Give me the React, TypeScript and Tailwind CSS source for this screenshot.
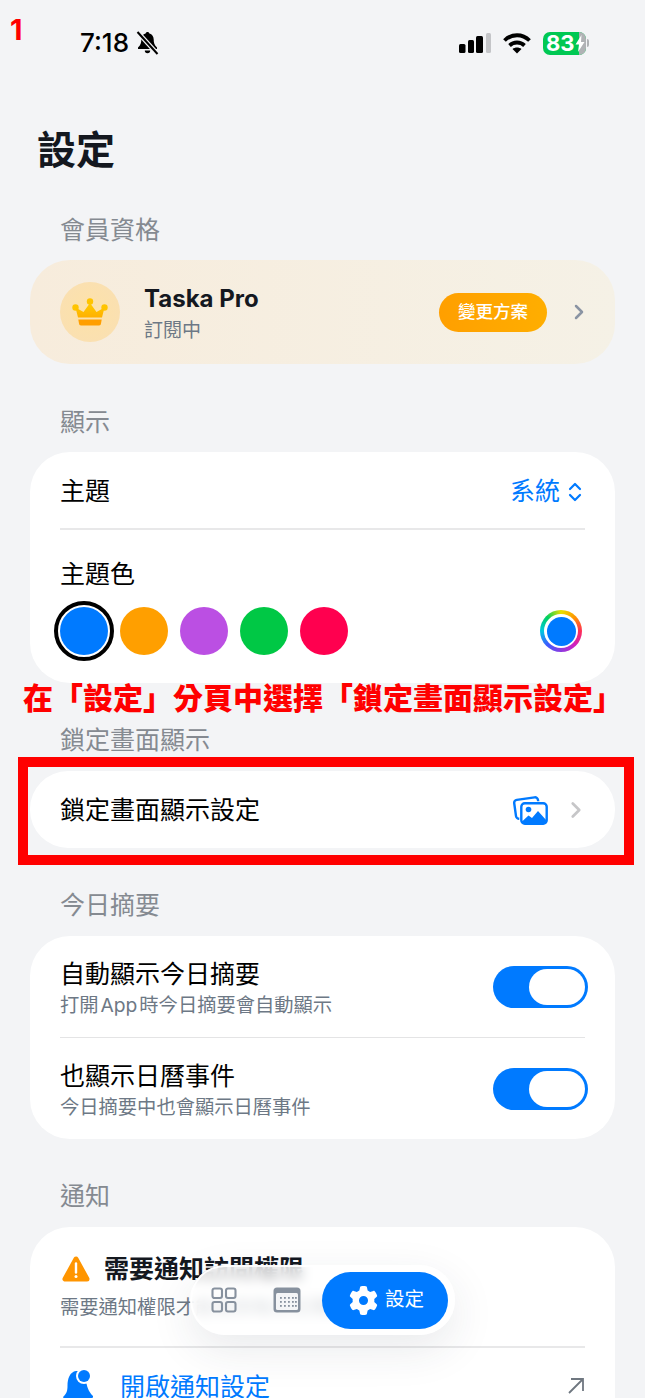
import { ChevronRight, ChevronsUpDown } from 'lucide-react';
import { FaGear } from 'react-icons/fa6';

const themeColors = ['bg-[#ff9f00]', 'bg-[#bb4fe3]', 'bg-[#00c845]', 'bg-[#ff004f]'];

const SectionLabel = ({ children }: { children: string }) => (
  <p className="px-[60px] text-[25px] leading-[30px] text-[#858a91]">{children}</p>
);

const Toggle = () => (
  <div className="flex h-[42px] w-[95px] shrink-0 items-center justify-end rounded-full bg-[#007aff] pr-[3px]">
    <div className="h-[36px] w-[56px] rounded-full bg-white" />
  </div>
);

const StatusBar = () => (
  <div className="flex h-[86px] items-center justify-between pl-[80px] pr-[56px]">
    <div className="flex items-center gap-[7px]">
      <span className="text-[26px] font-medium leading-none text-black">7:18</span>
      <svg width="23" height="24" viewBox="0 0 23 24">
        <path d="M11.500 1c1 0 1.700.7 1.900 1.600 2.800.8 4.300 3 4.300 6 0 3.400.6 5.500 3.300 8v1.400H2v-1.400c2.700-2.500 3.300-4.600 3.300-8 0-3 1.500-5.200 4.300-6C9.800 1.700 10.500 1 11.500 1z" fill="#000" />
        <path d="M8.800 19.500h5.400a2.700 2.700 0 0 1-5.400 0z" fill="#000" />
        <path d="M1.500 1l20 22" stroke="#f3f4f6" strokeWidth="4.500" />
        <path d="M1.500 1l20 22" stroke="#000" strokeWidth="2" />
      </svg>
    </div>
    <div className="flex items-center gap-[12px]">
      <svg width="32" height="20" viewBox="0 0 32 20">
        <rect x="0" y="11" width="6.500" height="9" rx="1.500" fill="#000" />
        <rect x="9" y="7" width="6" height="13" rx="1.500" fill="#000" />
        <rect x="17" y="3" width="7" height="17" rx="1.500" fill="#000" />
        <rect x="27" y="0" width="5" height="20" rx="1.500" fill="#c4c5c8" />
      </svg>
      <svg width="28" height="22" viewBox="0 0 28 22" fill="none" stroke="#000" strokeWidth="3.800">
        <path d="M1.500 8.500c7-7 18-7 25 0" />
        <path d="M6.500 13.500c4.200-4 10.800-4 15 0" />
        <path d="M14 21.500l-4.500-4.500c2.500-2 6.500-2 9 0z" fill="#000" stroke="none" />
      </svg>
      <div className="flex items-center">
        <div className="relative flex h-[23px] w-[43px] items-center overflow-hidden rounded-[7px] bg-[#00c853] pl-[3px]">
          <div className="absolute inset-y-0 right-0 w-[7px] bg-[#b0b2b5]" />
          <span className="relative text-[22px] font-bold leading-none text-white">83</span>
          <svg className="absolute right-[1px] top-[3px]" width="10" height="17" viewBox="0 0 10 17">
            <path d="M6.500 0L0.500 9.500h3.500L3 17l6.500-10H6z" fill="#fff" />
          </svg>
        </div>
        <div className="ml-[1px] h-[8px] w-[2px] rounded-r-full bg-[#b0b2b5]" />
      </div>
    </div>
  </div>
);

const MembershipCard = () => (
  <div className="mx-[30px] mt-[15px] flex h-[104px] items-center rounded-[40px] bg-gradient-to-r from-[#f7ecdc] to-[#f5f1e6] pl-[30px] pr-[24px]">
    <div className="flex h-[60px] w-[60px] items-center justify-center rounded-full bg-[radial-gradient(circle,#fde2a8_0%,#f9dfb4_100%)]">
      <svg width="36" height="28" viewBox="0 0 36 28">
        <defs>
          <linearGradient id="crown" x1="0" y1="0" x2="0" y2="1">
            <stop offset="0" stopColor="#ffcc00" />
            <stop offset="1" stopColor="#ffb000" />
          </linearGradient>
        </defs>
        <circle cx="18" cy="3.500" r="3.200" fill="#ffc400" />
        <circle cx="3.500" cy="9.500" r="3.200" fill="#ffc400" />
        <circle cx="32.500" cy="9.500" r="3.200" fill="#ffc400" />
        <path d="M18 5l6.500 9 8-4.500-2.500 10H6L3.500 9.500l8 4.500z" fill="url(#crown)" />
        <path d="M6.300 21.500h23.400l-.7 4a2 2 0 0 1-2 2H9a2 2 0 0 1-2-2z" fill="#ff9f00" />
      </svg>
    </div>
    <div className="ml-[24px] mt-[5px] flex-1">
      <p className="text-[24px] font-bold leading-[30px] text-[#14181f]">Taska Pro</p>
      <p className="mt-[2px] text-[19px] leading-[30px] text-[#6d7885]">訂閱中</p>
    </div>
    <div className="flex h-[39px] w-[108px] items-center justify-center rounded-full bg-gradient-to-r from-[#ff9f00] to-[#ffae00] text-[17.500px] font-medium text-white">
      變更方案
    </div>
    <ChevronRight className="ml-[20px] text-[#8a94a3]" size={24} strokeWidth={2.500} />
  </div>
);

const DisplayCard = () => (
  <div className="mx-[30px] mt-[15px] h-[231px] rounded-[40px] bg-white px-[30px]">
    <div className="flex h-[78px] items-center justify-between border-b-2 border-[#e8e8e9] pt-[4px]">
      <p className="text-[25px] text-black">主題</p>
      <div className="-mr-[2px] flex items-center gap-[3px] text-[#007aff]">
        <span className="text-[25px]">系統</span>
        <ChevronsUpDown size={24} strokeWidth={2.200} />
      </div>
    </div>
    <p className="mt-[29px] text-[25px] leading-[30px] text-black">主題色</p>
    <div className="mt-[12px] flex items-center">
      <div className="-ml-[6px] flex h-[60px] w-[60px] shrink-0 items-center justify-center rounded-full border-4 border-black bg-white">
        <div className="h-[48px] w-[48px] rounded-full bg-[#007aff]" />
      </div>
      <div className="ml-[6px] flex flex-1 items-center gap-[12px]">
        {themeColors.map(color => (
          <div key={color} className={`h-[48px] w-[48px] rounded-full ${color}`} />
        ))}
      </div>
      <div className="mr-[3px] flex h-[42px] w-[42px] items-center justify-center rounded-full bg-[conic-gradient(#e8e000,#ff9500,#ff2d55,#d020c0,#8e3be0,#3b5bff,#00c8e0,#00d060,#e8e000)]">
        <div className="flex h-[34px] w-[34px] items-center justify-center rounded-full bg-white">
          <div className="h-[29px] w-[29px] rounded-full bg-[#007aff]" />
        </div>
      </div>
    </div>
  </div>
);

const LockScreenCard = () => (
  <div className="mx-[30px] mt-[16px] flex h-[77px] items-center rounded-[38px] bg-white pl-[30px] pr-[26px]">
    <p className="flex-1 pt-[2px] text-[25px] text-black">鎖定畫面顯示設定</p>
    <svg width="35" height="31" viewBox="0 0 35 31" fill="none">
      <rect x="2" y="4.500" width="24" height="19" rx="3" transform="rotate(-8 14 14)" stroke="#007aff" strokeWidth="2.400" />
      <rect x="8.300" y="9.300" width="25.400" height="20.400" rx="3.500" fill="#fff" stroke="#fff" strokeWidth="4" />
      <rect x="8.300" y="9.300" width="25.400" height="20.400" rx="3.500" fill="#fff" stroke="#007aff" strokeWidth="2.400" />
      <circle cx="15.500" cy="15.500" r="2.800" fill="#007aff" />
      <path d="M8.500 28l7-6.500 3.500 2.500 6-7 8.500 9.500v2a1 1 0 0 1-1 1h-23z" fill="#007aff" />
    </svg>
    <ChevronRight className="ml-[15px] text-[#c6c6c8]" size={26} strokeWidth={2.500} />
  </div>
);

const SummaryRow = ({ title, subtitle }: { title: string; subtitle: string }) => (
  <div className="flex h-[101px] items-center justify-between">
    <div className="mt-[4px]">
      <p className="text-[25px] leading-[30px] text-black">{title}</p>
      <p className="mt-[3px] text-[19.300px] leading-[26px] text-[#6d7885] [word-spacing:-3.500px]">{subtitle}</p>
    </div>
    <Toggle />
  </div>
);

const SummaryCard = () => (
  <div className="mx-[30px] mt-[16px] h-[203px] rounded-[40px] bg-white pl-[30px] pr-[27px]">
    <SummaryRow title="自動顯示今日摘要" subtitle="打開 App 時今日摘要會自動顯示" />
    <div className="mr-[3px] h-[1px] bg-[#e4e4e5]" />
    <SummaryRow title="也顯示日曆事件" subtitle="今日摘要中也會顯示日曆事件" />
  </div>
);

const NotificationCard = () => (
  <div className="mx-[30px] mt-[16px] h-[220px] rounded-[40px] bg-white px-[30px]">
    <div className="flex items-center pt-[26px]">
      <svg width="28" height="26" viewBox="0 0 28 26" className="ml-[2px] shrink-0">
        <path d="M14 3L3 23h22z" fill="#ff9500" stroke="#ff9500" strokeWidth="5" strokeLinejoin="round" />
        <path d="M14 7.500v9" stroke="#fff" strokeWidth="2.400" strokeLinecap="round" />
        <circle cx="14" cy="20.500" r="1.500" fill="#fff" />
      </svg>
      <p className="ml-[14px] text-[25px] font-bold leading-[32px] text-[#14181f]">需要通知訪問權限</p>
    </div>
    <p className="mt-[9px] text-[19.300px] leading-[26px] text-[#6d7885]">需要通知權限才能收到每日任務提醒</p>
    <div className="mt-[26px] h-[2px] bg-[#e8e8e9]" />
    <div className="mt-[20px] flex items-center">
      <svg width="34" height="38" viewBox="0 0 34 38" className="ml-[1px] shrink-0">
        <path d="M3 28c2.500-2.500 3.500-5 3.500-10C6.500 10 9 4 15 3c5-.5 8 3 10 10 1 5 2 10 7 15v1a1 1 0 0 1-1 1H3a1 1 0 0 1-1-1z" fill="#007aff" />
        <circle cx="23" cy="8" r="8" fill="#fff" />
        <circle cx="23" cy="8" r="6" fill="#007aff" />
      </svg>
      <p className="ml-[25px] flex-1 text-[25px] leading-[38px] text-[#007aff]">開啟通知設定</p>
      <svg width="16" height="16" viewBox="0 0 16 16" fill="none" stroke="#6f7780" strokeWidth="1.800" className="mb-[2px] mr-[1px]">
        <path d="M1 15L15 1M3 1h12v12" />
      </svg>
    </div>
  </div>
);

const TabBar = () => (
  <div className="absolute left-[190px] top-[1265px] flex h-[70px] w-[265px] items-center rounded-full border-2 border-white/90 bg-white/75 pl-[19px] pr-[5px] shadow-[0_14px_44px_rgba(40,50,70,0.10)] backdrop-blur-[6px]">
    <svg width="26" height="26" viewBox="0 0 26 26" fill="none" stroke="#87919e" strokeWidth="2.100" className="shrink-0">
      <rect x="1.500" y="1.500" width="9.500" height="9.500" rx="2" />
      <rect x="15" y="1.500" width="9.500" height="9.500" rx="2" />
      <rect x="1.500" y="15" width="9.500" height="9.500" rx="2" />
      <rect x="15" y="15" width="9.500" height="9.500" rx="2" />
    </svg>
    <svg width="28" height="26" viewBox="0 0 28 26" className="ml-[36px] shrink-0">
      <rect x="0.500" y="0.500" width="27" height="25" rx="3.500" fill="#87919e" />
      <rect x="3" y="6" width="22" height="17" rx="1.500" fill="#f4f5f7" />
      {[10, 14, 18].map(y =>
        [7, 11, 15, 19, 22].map(x => <rect key={`${x}-${y}`} x={x} y={y} width="1.800" height="1.800" fill="#87919e" />),
      )}
    </svg>
    <div className="ml-[21px] flex h-[57px] w-[127px] items-center rounded-full bg-[#007aff] pl-[27px] text-white">
      <FaGear size={29} />
      <span className="ml-[7px] text-[19.500px]">設定</span>
    </div>
  </div>
);

const App = () => (
  <div
    className="relative h-[1398px] w-[645px] overflow-hidden bg-[#f3f4f6]"
    style={{ fontFamily: 'Inter, "Noto Sans CJK TC", sans-serif' }}
  >
    <span className="absolute left-[10px] top-[12px] text-[29px] font-bold leading-[36px] text-[#ff0000]">1</span>
    <StatusBar />
    <h1 className="mt-[41px] px-[37px] text-[39px] font-bold leading-[46px] text-[#14181f]">設定</h1>

    <section className="mt-[42px]">
      <SectionLabel>會員資格</SectionLabel>
      <MembershipCard />
    </section>
    <section className="mt-[43px]">
      <SectionLabel>顯示</SectionLabel>
      <DisplayCard />
    </section>
    <section className="mt-[42px]">
      <SectionLabel>鎖定畫面顯示</SectionLabel>
      <LockScreenCard />
    </section>
    <section className="mt-[42px]">
      <SectionLabel>今日摘要</SectionLabel>
      <SummaryCard />
    </section>
    <section className="mt-[42px]">
      <SectionLabel>通知</SectionLabel>
      <NotificationCard />
    </section>

    <p className="absolute left-[23px] top-[680px] whitespace-nowrap text-[30px] font-black leading-[36px] text-[#ff0000]">
      在「設定」分頁中選擇「鎖定畫面顯示設定」
    </p>
    <div className="absolute left-[18px] top-[757px] h-[108px] w-[616px] border-[10px] border-[#ff0000]" />
    <TabBar />
  </div>
);

export default App;
